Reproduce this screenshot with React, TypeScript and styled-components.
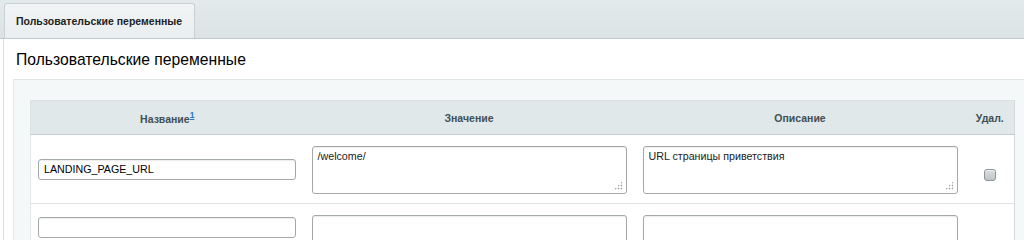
import React from 'react';
import styled, { createGlobalStyle } from 'styled-components';

const GlobalStyle = createGlobalStyle`
  html, body {
    margin: 0;
    padding: 0;
    background: #fff;
    font-family: "Liberation Sans", Arial, sans-serif;
  }
`;

const TabBar = styled.div({
  alignItems: 'flex-end',
  background: 'linear-gradient(#e3eaec, #dbe3e5)',
  borderBottom: '1px solid #bfc8cb',
  boxSizing: 'border-box',
  display: 'flex',
  height: 39,
  paddingLeft: 4,
});

const Tab = styled.div({
  alignItems: 'center',
  background: 'linear-gradient(#f1f4f5, #e9eef0)',
  border: '1px solid #c9d1d4',
  borderBottom: 'none',
  borderRadius: '3px 3px 0 0',
  boxSizing: 'border-box',
  color: '#222',
  display: 'flex',
  fontSize: 10.5,
  fontWeight: 700,
  height: 35,
  padding: '0 11px',
  width: 191,
});

const Panel = styled.div({
  background: '#fff',
  borderLeft: '1px solid #d8dfe1',
  marginLeft: 3,
  minHeight: 201,
});

const Title = styled.h2({
  alignItems: 'center',
  boxSizing: 'border-box',
  color: '#000',
  display: 'flex',
  fontSize: 15.7,
  fontWeight: 400,
  height: 40,
  margin: 0,
  paddingLeft: 12,
  paddingTop: 1,
});

const Block = styled.div({
  background: '#f5f8f9',
  borderLeft: '1px solid #e1e7e9',
  borderTop: '1px solid #dfe5e7',
  marginLeft: 9,
  minHeight: 161,
  padding: '20px 9px 0 16px',
});

const Table = styled.table({
  borderCollapse: 'collapse',
  width: '100%',
});

const HeadCell = styled.th<{ $w: number }>(({ $w }) => ({
  background: '#e0e8ea',
  borderBottom: '1px solid #c5ced1',
  borderTop: '1px solid #d9e1e3',
  boxSizing: 'border-box',
  color: '#3f4f54',
  fontSize: 10.5,
  fontWeight: 700,
  height: 34,
  padding: 0,
  textAlign: 'center',
  width: $w,
  '&:first-child': { borderLeft: '1px solid #d9e1e3' },
  '&:last-child': { borderRight: '1px solid #d2dadc' },
}));

const Note = styled.a({
  color: '#2675d7',
  fontSize: 8.5,
  textDecoration: 'underline',
  verticalAlign: 'super',
});

const Row = styled.tr<{ $fresh?: boolean }>(({ $fresh }) => ({
  background: '#fff',
  '& > td': {
    borderBottom: '1px solid #dce2e4',
  },
  '& > td:first-child': {
    borderLeft: '1px solid #e1e7e9',
    paddingTop: $fresh ? 13 : 0,
    verticalAlign: $fresh ? 'top' : 'middle',
  },
  '& > td:last-child': { borderRight: '1px solid #d2dadc' },
}));

const Cell = styled.td<{ $center?: boolean }>(({ $center }) => ({
  boxSizing: 'border-box',
  height: 69,
  padding: '11px 8px 0 8px',
  textAlign: $center ? 'center' : 'left',
  verticalAlign: $center ? 'middle' : 'top',
}));

const NameCell = styled(Cell)({
  paddingLeft: 7,
  paddingTop: 0,
});

const TextInput = styled.input({
  background: '#fff',
  border: '1px solid #a3a9ab',
  borderRadius: 3,
  boxShadow: 'inset 0 1px 1px rgba(0,0,0,0.08)',
  boxSizing: 'border-box',
  color: '#000',
  display: 'block',
  fontFamily: '"Liberation Sans", Arial, sans-serif',
  fontSize: 10.7,
  height: 21,
  outline: 'none',
  padding: '0 5px',
  width: '100%',
});

const AreaWrap = styled.div({
  position: 'relative',
  '&::after': {
    backgroundImage: 'radial-gradient(circle, #9ea3a5 0.8px, transparent 1.1px)',
    backgroundSize: '3px 3px',
    bottom: 4,
    clipPath: 'polygon(100% 0, 100% 100%, 0 100%)',
    content: '""',
    height: 9,
    pointerEvents: 'none',
    position: 'absolute',
    right: 4,
    width: 9,
  },
});

const TextArea = styled.textarea({
  background: '#fff',
  border: '1px solid #a3a9ab',
  borderRadius: 3,
  boxShadow: 'inset 0 1px 1px rgba(0,0,0,0.08)',
  boxSizing: 'border-box',
  color: '#222',
  display: 'block',
  fontFamily: '"Liberation Sans", Arial, sans-serif',
  fontSize: 10.7,
  height: 48,
  outline: 'none',
  padding: '3px 5px',
  resize: 'none',
  width: '100%',
});

const CheckBox = styled.span({
  background: 'linear-gradient(#dcdfe0, #bfc4c6)',
  border: '1px solid #8f9699',
  borderRadius: 3,
  boxShadow: 'inset 0 1px 0 rgba(255,255,255,0.6)',
  boxSizing: 'border-box',
  display: 'inline-block',
  height: 12,
  verticalAlign: 'middle',
  width: 12,
});

type Variable = { name: string; value: string; description: string };

const rows: Variable[] = [
  { name: 'LANDING_PAGE_URL', value: '/welcome/', description: 'URL страницы приветствия' },
  { name: '', value: '', description: '' },
];

const VarRow = ({ row }: { row: Variable }) => (
  <Row $fresh={!row.name}>
    <NameCell>
      <TextInput defaultValue={row.name} />
    </NameCell>
    <Cell>
      <AreaWrap>
        <TextArea defaultValue={row.value} />
      </AreaWrap>
    </Cell>
    <Cell>
      <AreaWrap>
        <TextArea defaultValue={row.description} />
      </AreaWrap>
    </Cell>
    <Cell $center>
      {row.name && <CheckBox />}
    </Cell>
  </Row>
);

const App = () => (
  <>
    <GlobalStyle />
    <TabBar>
      <Tab>Пользовательские переменные</Tab>
    </TabBar>
    <Panel>
      <Title>Пользовательские переменные</Title>
      <Block>
        <Table>
          <thead>
            <tr>
              <HeadCell $w={273}>
                Название<Note href="#note1">1</Note>
              </HeadCell>
              <HeadCell $w={331}>Значение</HeadCell>
              <HeadCell $w={331}>Описание</HeadCell>
              <HeadCell $w={49}>Удал.</HeadCell>
            </tr>
          </thead>
          <tbody>
            {rows.map((row, i) => (
              <VarRow key={i} row={row} />
            ))}
          </tbody>
        </Table>
      </Block>
    </Panel>
  </>
);

export default App;
